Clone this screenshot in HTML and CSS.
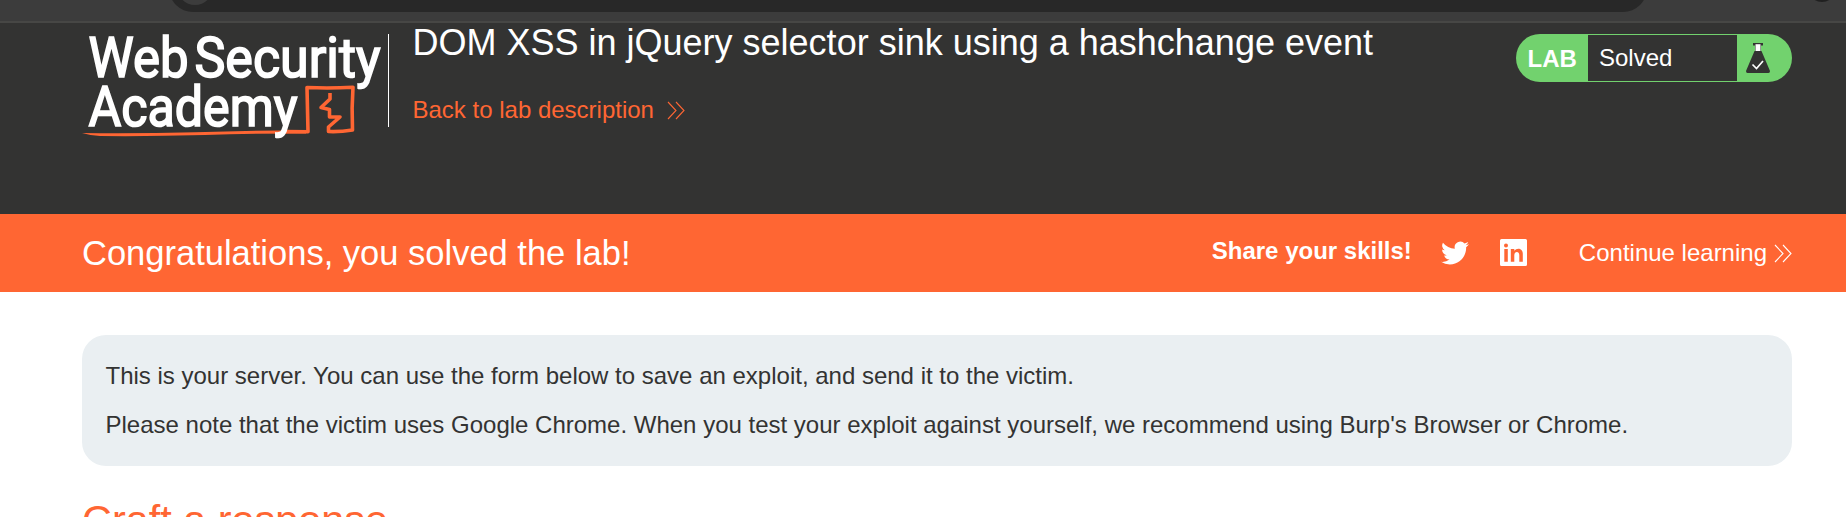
FILE: index.html
```html
<!DOCTYPE html>
<html lang="en">
<head>
<meta charset="utf-8">
<title>DOM XSS in jQuery selector sink using a hashchange event</title>
<link rel="stylesheet" href="styles.css">
</head>
<body>
<div class="toolbar">
  <svg width="1846" height="21" viewBox="0 0 1846 21">
    <rect x="169" y="-36" width="1478" height="48" rx="24" fill="#282828"/>
    <circle cx="195" cy="-13" r="18" fill="#3c3c3c"/>
    <circle cx="1822" cy="-12" r="14" fill="#202020"/>
  </svg>
</div>
<header class="header">
  <svg class="logo" width="308" height="110" viewBox="80 34 308 110">
    <path d="M82 133L100 133.200Q145 133.500 195 132.300Q250 130.500 306 130.200V133.500Q250 133.500 205 135Q150 136.500 100 136Q90 135.500 82 133z" fill="#ff6633"/>
    <path d="M285 131.500L308 131.700L307 87.500Q330 88.500 353 87.200Q351.500 108 352.500 130Q340 132 328.500 131.500V127L340 117H329.500V109.500L321 107.500L330 99V93" fill="none" stroke="#ff6633" stroke-width="3.600" stroke-linejoin="round"/>
    <g class="logo-text">
      <text x="88.500" y="76.700" textLength="100" lengthAdjust="spacingAndGlyphs">Web</text>
      <text x="194.500" y="76.700" textLength="186" lengthAdjust="spacingAndGlyphs">Security</text>
      <text x="88.500" y="125.700" textLength="209" lengthAdjust="spacingAndGlyphs">Academy</text>
    </g>
  </svg>
  <div class="heading">
    <h1 class="title">DOM XSS in jQuery selector sink using a hashchange event</h1>
    <a class="back"><span>Back to lab description</span>
      <svg width="18" height="19" viewBox="0 0 18 19"><path d="M1 1l8 8.500L1 18M9 1l8 8.500L9 18" fill="none" stroke="#ff6633" stroke-width="1.100"/></svg>
    </a>
  </div>
  <div class="badge">
    <strong class="badge-lab">LAB</strong>
    <span class="badge-status">Solved</span>
    <svg class="flask" width="24" height="30" viewBox="0 0 24 30">
      <path d="M7 0h10v2.500h-2V8h.5L24 28Q24 30 22.500 30h-21Q0 30 0 28L8.500 8H9V2.500H7z" fill="#333332"/>
      <path d="M9.500 1.200h5V8h-5z" fill="#fff"/>
      <path d="M6.500 21.500l4 4L17 18" fill="none" stroke="#fff" stroke-width="1.700"/>
    </svg>
  </div>
</header>
<section class="notice">
  <h2 class="congrats">Congratulations, you solved the lab!</h2>
  <strong class="share">Share your skills!</strong>
  <svg class="twitter" width="28" height="26" viewBox="0 1.500 24 21"><path fill="#fff" d="M24 4.557a9.800 9.800 0 0 1-2.828.775 4.930 4.930 0 0 0 2.165-2.724 9.900 9.900 0 0 1-3.127 1.195 4.920 4.920 0 0 0-8.384 4.482A13.940 13.940 0 0 1 1.671 3.149a4.920 4.920 0 0 0 1.523 6.574 4.900 4.900 0 0 1-2.229-.616c-.054 2.281 1.581 4.415 3.949 4.890a4.900 4.900 0 0 1-2.224.084 4.930 4.930 0 0 0 4.600 3.419A9.900 9.900 0 0 1 0 19.540a13.900 13.900 0 0 0 7.548 2.212c9.142 0 14.307-7.721 13.995-14.646A10 10 0 0 0 24 4.557z"/></svg>
  <svg class="linkedin" width="27" height="27" viewBox="0 0 27 27"><path fill="#fff" fill-rule="evenodd" d="M1.500 0h24Q27 0 27 1.500v24q0 1.500-1.500 1.500h-24Q0 27 0 25.500v-24Q0 0 1.500 0zM4.300 10v12.800h3.500V10zM6 4.500a2 2 0 1 0 0 4 2 2 0 0 0 0-4zM10.800 10v12.800h3.500v-6.500c0-4.200 5-4.400 5-.3v6.800h3.500v-8c0-5.700-6-6.300-8.500-3V10z"/></svg>
  <a class="continue"><span>Continue learning</span>
    <svg width="18" height="19" viewBox="0 0 18 19"><path d="M1 1l8 8.500L1 18M9 1l8 8.500L9 18" fill="none" stroke="#fff" stroke-width="1.100"/></svg>
  </a>
</section>
<main class="content">
  <div class="info">
    <p>This is your server. You can use the form below to save an exploit, and send it to the victim.</p>
    <p>Please note that the victim uses Google Chrome. When you test your exploit against yourself, we recommend using Burp's Browser or Chrome.</p>
  </div>
  <h2 class="craft">Craft a response</h2>
</main>
</body>
</html>
```
FILE: styles.css
```css
* { box-sizing: border-box; }
html, body { height: 517px; overflow: hidden; }
body { margin: 0; background: #fff; color: #333332; font: 24px/28px "Liberation Sans", Arial, sans-serif; }
h1, h2, p { margin: 0; font-weight: 400; white-space: nowrap; }
svg { display: block; flex: none; }
.toolbar { height: 23px; background: #3c3c3c; border-bottom: 2px solid #474745; }
.header { height: 191px; background: #333332; color: #fff; display: flex; align-items: flex-start; padding: 11px 54px 0 80px; }
.logo { overflow: visible; }
.logo-text { fill: #fff; stroke: #fff; stroke-width: 1.700px; font: 400 56px Roboto, sans-serif; }
.heading { height: 93px; border-left: 1px solid #fff; padding-left: 23.500px; }
.title { font-size: 36px; line-height: 42px; margin-top: -12px; }
.back { display: flex; align-items: center; gap: 13px; margin-top: 32px; color: #ff6633; }
.badge { width: 276px; height: 48px; margin-left: auto; border-radius: 24px; background: #72d26e; display: flex; align-items: center; }
.badge-lab { width: 72px; padding: 2px 0 0 11.500px; }
.badge-status { width: 149px; height: 46px; line-height: 46px; padding-left: 11px; background: #333332; }
.flask { margin-left: 9px; }
.notice { height: 78px; background: #ff6633; color: #fff; display: flex; align-items: center; padding: 0 54px 0 82px; }
.congrats { font-size: 34.5px; line-height: 40px; }
.share { margin-left: auto; margin-top: -4px; }
.twitter { margin: -1px 0 0 29px; }
.linkedin { margin: -1px 0 0 31px; }
.continue { display: flex; align-items: center; gap: 7px; margin-left: 52px; }
.content { padding: 43px 54px 0 82px; }
.info { height: 131px; border-radius: 24px; background: #eaeff2; padding: 27px 24px 27px 23.500px; display: flex; flex-direction: column; gap: 21px; }
.craft { margin-top: 30px; font-size: 41.400px; line-height: 48px; color: #ff6633; }
```
